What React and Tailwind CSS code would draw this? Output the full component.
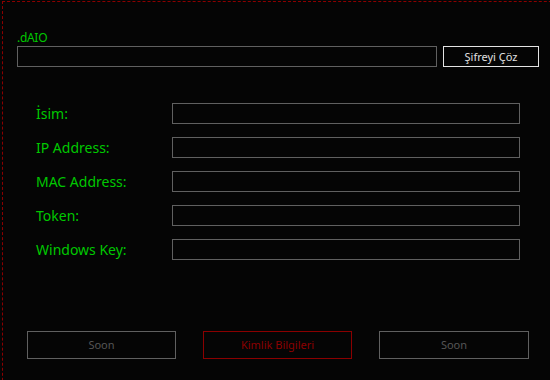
const fields = ['İsim:', 'IP Address:', 'MAC Address:', 'Token:', 'Windows Key:']

export default function App() {
  return (
    <div className="h-[380px] w-[550px] overflow-hidden bg-[#050505] pl-[2px] pt-[1px] font-['Noto_Sans',sans-serif]">
      <div className="h-[420px] w-[600px] border-l border-t border-dashed border-[#8b0000]">
        <div className="w-[547px] pl-[14px] pt-[27px]">
          <p className="h-[17px] text-[12px] leading-[17px] tracking-[-0.3px] text-[#00c800]">.dAIO</p>
          <div className="flex gap-[6px]">
            <div className="h-[21px] w-[420px] border border-[#606060]" />
            <button
              type="button"
              className="h-[21px] w-[96px] border border-[#e4e4e4] text-[11px] leading-none text-[#e0e0e0]"
            >
              Şifreyi Çöz
            </button>
          </div>
        </div>

        <div className="flex w-[547px] flex-col gap-[13px] pt-[36px]">
          {fields.map((label) => (
            <div key={label} className="flex items-center">
              <span className="w-[169px] pl-[33px] text-[14px] text-[#00c800]">{label}</span>
              <div className="h-[21px] w-[348px] border border-[#606060]" />
            </div>
          ))}
        </div>

        <div className="flex w-[547px] gap-[27px] pl-[24px] pt-[71px]">
          <button type="button" className="h-[28px] w-[149px] border border-[#606060] text-[11px] text-[#555555]">
            Soon
          </button>
          <button type="button" className="h-[28px] w-[149px] border border-[#8b0000] text-[11px] text-[#8b0000]">
            Kimlik Bilgileri
          </button>
          <button type="button" className="h-[28px] w-[150px] border border-[#606060] text-[11px] text-[#555555]">
            Soon
          </button>
        </div>
      </div>
    </div>
  )
}
